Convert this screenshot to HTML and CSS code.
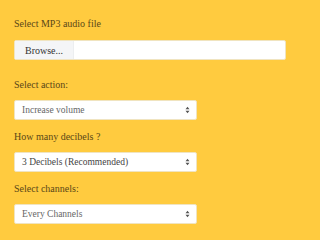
FILE: index.html
```html
<!DOCTYPE html>
<html>
<head>
<meta charset="utf-8">
<link rel="stylesheet" href="styles.css">
</head>
<body>
<form class="form">
  <div class="group group-file">
    <label class="label">Select MP3 audio file</label>
    <div class="file"><span class="browse">Browse...</span><span class="file-name"></span></div>
  </div>
  <div class="group">
    <label class="label">Select action:</label>
    <div class="select muted"><span class="value">Increase volume</span><svg class="arrows" width="5" height="8" viewBox="0 0 5 8"><path d="M0.5 3.2 L2.5 0.8 L4.5 3.2 Z M0.5 4.8 L2.5 7.2 L4.5 4.8 Z" fill="#555"/></svg></div>
  </div>
  <div class="group">
    <label class="label">How many decibels ?</label>
    <div class="select"><span class="value">3 Decibels (Recommended)</span><svg class="arrows" width="5" height="8" viewBox="0 0 5 8"><path d="M0.5 3.2 L2.5 0.8 L4.5 3.2 Z M0.5 4.8 L2.5 7.2 L4.5 4.8 Z" fill="#555"/></svg></div>
  </div>
  <div class="group">
    <label class="label">Select channels:</label>
    <div class="select muted"><span class="value">Every Channels</span><svg class="arrows" width="5" height="8" viewBox="0 0 5 8"><path d="M0.5 3.2 L2.5 0.8 L4.5 3.2 Z M0.5 4.8 L2.5 7.2 L4.5 4.8 Z" fill="#555"/></svg></div>
  </div>
</form>
</body>
</html>
```

FILE: styles.css
```css
html, body {
  margin: 0;
  padding: 0;
  background: #ffcb3f;
}
body {
  font-family: "Liberation Serif", "Times New Roman", serif;
  font-size: 10px;
  color: #5a4717;
}
.form {
  padding: 18px 14px 0 14px;
  width: 272px;
}
.group {
  margin-bottom: 11px;
}
.group-file {
  margin-bottom: 19px;
}
.label {
  display: block;
  line-height: 12px;
  margin-bottom: 9px;
}
.group-file .label {
  margin-bottom: 10px;
}
.file {
  display: flex;
  height: 20px;
  background: #fff;
  border: 1px solid #f0e4c0;
  border-radius: 2px;
  box-sizing: border-box;
  overflow: hidden;
}
.browse {
  width: 58px;
  background: #f4f5f7;
  color: #333;
  display: flex;
  align-items: center;
  justify-content: center;
  border-right: 1px solid #eceef0;
}
.select {
  width: 183px;
  height: 20px;
  box-sizing: border-box;
  background: #fff;
  border: 1px solid #f0e4c0;
  border-radius: 2px;
  display: flex;
  align-items: center;
  justify-content: space-between;
  padding: 0 6px 0 7px;
  color: #444;
  font-size: 9.5px;
}
.select.muted {
  color: #666;
}
.arrows {
  display: block;
}
```
